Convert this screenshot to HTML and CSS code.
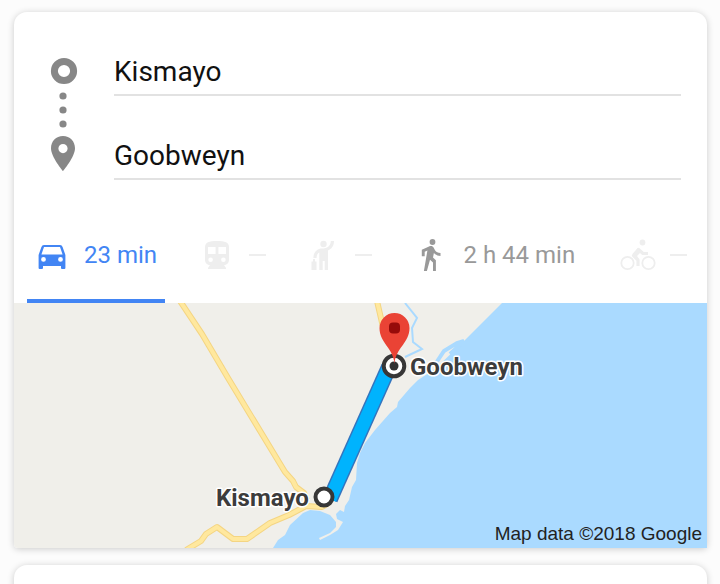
FILE: index.html
```html
<!DOCTYPE html>
<html lang="en">
<head>
  <meta charset="UTF-8">
  <meta name="viewport" content="width=device-width, initial-scale=1.0">
  <title>Kismayo to Goobweyn</title>
  <link rel="stylesheet" href="styles.css">
</head>
<body>

  <main class="results">
    <section class="card">

      <!-- Start and destination -->
      <form class="route-form">
        <svg class="route-icons" width="28" height="116" viewBox="0 0 28 116" fill="#878787" aria-hidden="true">
          <circle cx="14" cy="14" r="9.6" fill="none" stroke="#878787" stroke-width="7"/>
          <circle cx="13" cy="39" r="3.6"/>
          <circle cx="13" cy="53" r="3.6"/>
          <circle cx="13" cy="67" r="3.6"/>
          <path fill-rule="evenodd" d="M13 79C6 79 1 84.300 1 91.200C1 100 13 114 13 114S25 100 25 91.200C25 84.300 20 79 13 79ZM13 87a4.600 4.600 0 1 1 0 9.200a4.600 4.600 0 0 1 0-9.200Z"/>
        </svg>
        <div class="route-fields">
          <input class="place-input" type="text" value="Kismayo" aria-label="Starting point">
          <input class="place-input" type="text" value="Goobweyn" aria-label="Destination">
        </div>
      </form>

      <!-- Travel modes -->
      <nav class="modes" aria-label="Travel mode">
        <button class="mode active" type="button" aria-label="Driving, 23 min">
          <svg width="28" height="32" viewBox="0 0 28 32" fill="currentColor" aria-hidden="true">
            <path fill-rule="evenodd" d="M6 6H22Q24 6 24.600 8L27.400 16V29Q27.400 30 26.400 30H24Q23 30 23 29V27H5V29Q5 30 4 30H1.600Q.6 30 .6 29V16L3.400 8Q4 6 6 6ZM6 8L3.400 15.600H24.600L22 8ZM5.500 18a2.400 2.400 0 1 0 0 4.800a2.400 2.400 0 0 0 0-4.800ZM22.500 18a2.400 2.400 0 1 0 0 4.800a2.400 2.400 0 0 0 0-4.800Z"/>
          </svg>
          <span>23 min</span>
        </button>
        <button class="mode unavailable transit" type="button" aria-label="Transit, not available">
          <svg width="24" height="32" viewBox="0 0 24 32" fill="currentColor" aria-hidden="true">
            <path fill-rule="evenodd" d="M12 2C4 2 0 3.500 0 8V21C0 24 2.500 26 5 26L3 29V30H21V29L19 26C21.500 26 24 24 24 21V8C24 3.500 20 2 12 2ZM3 8H10.600V15H3ZM13.400 8H21V15H13.400ZM5.600 18.500a2.300 2.300 0 1 1 0 4.600a2.300 2.300 0 0 1 0-4.600ZM18.400 18.500a2.300 2.300 0 1 1 0 4.600a2.300 2.300 0 0 1 0-4.600Z"/>
          </svg>
          <span class="dash"></span>
        </button>
        <button class="mode unavailable ride" type="button" aria-label="Ride service, not available">
          <svg width="24" height="32" viewBox="0 0 24 32" fill="currentColor" aria-hidden="true">
            <circle cx="12.500" cy="5" r="3.200"/>
            <path d="M19.800 2H23C23 7 20.500 10 17 11.500V31H13.700V22H11.700V31H8.300V13.500C6.500 14.500 5.600 16 5.600 19H2.400C2.400 13 6.500 9.600 11 9.600C16 9.600 19.800 7 19.800 2ZM.5 22.500H2V20H4V22.500H5.500V31H.5Z"/>
          </svg>
          <span class="dash"></span>
        </button>
        <button class="mode walking" type="button" aria-label="Walking, 2 h 44 min">
          <svg width="20" height="32" viewBox="0 0 20 32" fill="currentColor" aria-hidden="true">
            <circle cx="11.500" cy="3" r="2.900"/>
            <path d="M8 7.500C10 6.600 11.800 7 12.700 8.800L14 11.200C15.200 13 17 14 19.500 14V16.900C16.800 16.900 14.500 15.800 12.900 14L12 18.500L14.900 21.300V32H12V23.500L9 20.700L5.900 32H2.900L6.400 11.600L3.700 12.700V17.300H.8V10.700Z"/>
          </svg>
          <span>2 h 44 min</span>
        </button>
        <button class="mode unavailable cycling" type="button" aria-label="Cycling, not available">
          <svg width="36" height="32" viewBox="0 0 36 32" fill="none" stroke="currentColor" aria-hidden="true">
            <circle cx="7.500" cy="24" r="6.200" stroke-width="1.800"/>
            <circle cx="28.500" cy="24" r="6.200" stroke-width="1.800"/>
            <circle cx="22.500" cy="3.500" r="2.900" fill="currentColor" stroke="none"/>
            <path d="M18 27V21L13.500 16.500L18.500 10.500L23 14.500H28" stroke-width="3.200" stroke-linejoin="round"/>
            <path d="M12.500 15L18 9L21 13L17 17L19 20Z" fill="currentColor" stroke="none"/>
          </svg>
          <span class="dash"></span>
        </button>
      </nav>

      <!-- Route map -->
      <svg class="map" viewBox="0 0 693 245" role="img" aria-label="Map of the route from Kismayo to Goobweyn">
        <rect width="693" height="245" fill="#f0efea"/>
        <path class="water" d="M488 0L446 42L421 66L404 77L396 85L384 99L383 104L376 110L361 127L351 140L346 150L343 160L342 177L338 184L335 197L331 203L330 209L326 207L322 211L323 216L329 219L324 227L316 232L306 237L305 235L316 230L322 224L322 219L316 212L306 208L296 207L289 210L276 222L271 232L264 237L259 245H693V0Z"/>
        <g class="stream">
          <path d="M391 0L403 15L398 25L399 39L408 46L391 54"/>
          <path class="inlet" d="M422 60L430 48L443 40L450 38L436 51"/>
        </g>
        <g class="road-edge">
          <path d="M166 -2L188 31L214 75L271 169L279 178L282 184L290 190L293 197"/>
          <path d="M363 -2L369 24L374 38"/>
          <path d="M172 247L187 238L192 231L203 224L219 236L233 236L256 220L275 212L292 203L308 204L315 200"/>
        </g>
        <g class="road">
          <path d="M166 -2L188 31L214 75L271 169L279 178L282 184L290 190L293 197"/>
          <path d="M363 -2L369 24L374 38"/>
          <path d="M172 247L187 238L192 231L203 224L219 236L233 236L256 220L275 212L292 203L308 204L315 200"/>
        </g>
        <path d="M316 196L375 64" stroke="#3474bd" stroke-width="16"/>
        <path d="M316 196L375 64" stroke="#00b3fd" stroke-width="13"/>
        <circle cx="310" cy="194" r="8.500" fill="#fff" stroke="#373737" stroke-width="4"/>
        <circle cx="380" cy="63" r="10.300" fill="#fff" stroke="#373737" stroke-width="4"/>
        <circle cx="380" cy="63" r="4.500" fill="#333"/>
        <path d="M380.500 61C379.500 45 365.500 40 365.500 25A15 15 0 0 1 395.500 25C395.500 40 381.500 45 380.500 61Z" fill="#ea4335"/>
        <rect x="375" y="19.500" width="11" height="11" rx="4" fill="#960b0a"/>
        <text class="map-label" x="202" y="203">Kismayo</text>
        <text class="map-label" x="396" y="72">Goobweyn</text>
        <text class="map-credit" x="688" y="237">Map data ©2018 Google</text>
      </svg>
    </section>

    <section class="card next-card"></section>
  </main>

</body>
</html>
```

FILE: styles.css
```css
* {
  box-sizing: border-box;
}

body {
  margin: 0;
  background-color: #fcfcfc;
  font-family: Roboto, Arial, sans-serif;
}

/* Result cards */
.results {
  height: 100vh;
  padding: 12px 13px 0 14px;
  overflow: hidden;
  display: flex;
  flex-direction: column;
  gap: 17px;
}

.card {
  flex: none;
  background: #fff;
  border-radius: 13px 13px 4px 4px;
  box-shadow: 0 1px 7px rgba(0, 0, 0, 0.2);
}

.next-card {
  height: 120px;
}

/* Start and destination */
.route-form {
  display: flex;
  gap: 36px;
  padding: 45px 26px 0 36px;
}

.route-icons {
  flex: none;
}

.route-fields {
  flex: 1;
  display: flex;
  flex-direction: column;
  gap: 34px;
  margin-top: -11px;
}

.place-input {
  width: 100%;
  height: 50px;
  padding: 2px 0 0;
  border: 0;
  border-bottom: 2px solid #e2e2e2;
  background: none;
  color: #111;
  font: 28px Roboto, Arial, sans-serif;
  outline: none;
}

/* Travel modes */
.modes {
  display: flex;
  justify-content: space-between;
  padding: 42px 20px 0 13px;
}

.mode {
  height: 81px;
  padding: 0 0 12px;
  border: 0;
  border-bottom: 4px solid transparent;
  background: none;
  display: flex;
  align-items: center;
  gap: 20px;
  color: #999;
  font: 24px Roboto, Arial, sans-serif;
  cursor: pointer;
}

.mode.active {
  padding: 0 8px 12px 11px;
  gap: 18px;
  border-bottom-color: #4285f4;
  color: #4285f4;
}

.mode.unavailable {
  color: #eee;
}

.transit {
  padding-right: 5px;
}

.ride {
  padding-right: 10px;
}

.walking {
  gap: 22px;
  padding-right: 5px;
}

.mode.cycling {
  gap: 14px;
}

.dash {
  width: 17px;
  height: 2px;
  background: #eee;
}

/* Map */
.map {
  display: block;
  width: 100%;
  border-radius: 0 0 0 4px;
}

.water {
  fill: #aadaff;
}

.stream {
  fill: none;
  stroke: #aadaff;
  stroke-width: 2px;
}

.inlet {
  stroke-width: 4px;
}

.road-edge,
.road {
  fill: none;
  stroke: #f4d583;
  stroke-width: 6px;
  stroke-linejoin: round;
}

.road {
  stroke: #ffe89e;
  stroke-width: 4px;
}

.map-label {
  fill: #3c3c3c;
  stroke: #fff;
  stroke-width: 3px;
  stroke-linejoin: round;
  paint-order: stroke;
  font-size: 24px;
  font-weight: 700;
}

.map-credit {
  fill: #222;
  font: 19px "Liberation Sans", Arial, sans-serif;
  text-anchor: end;
}
```
